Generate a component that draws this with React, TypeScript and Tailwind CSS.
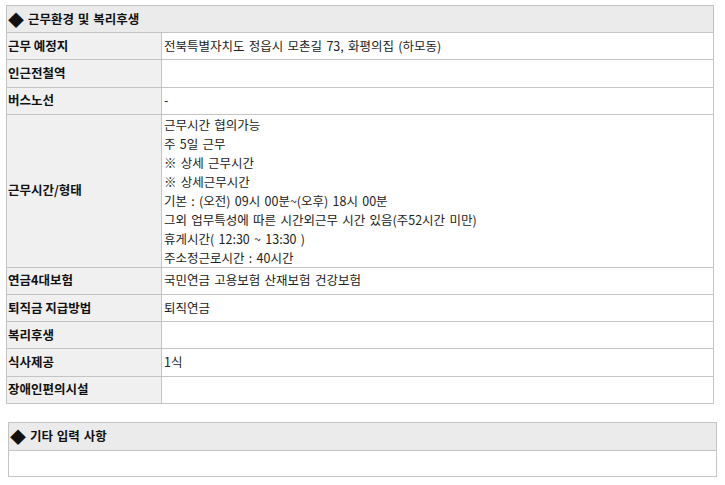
const rows: { label: string; value?: string[] }[] = [
  { label: '근무 예정지', value: ['전북특별자치도 정읍시 모촌길 73, 화평의집 (하모동)'] },
  { label: '인근전철역' },
  { label: '버스노선', value: ['-'] },
  {
    label: '근무시간/형태',
    value: [
      '근무시간 협의가능',
      '주 5일 근무',
      '※ 상세 근무시간',
      '※ 상세근무시간',
      '기본 : (오전) 09시 00분~(오후) 18시 00분',
      '그외 업무특성에 따른 시간외근무 시간 있음(주52시간 미만)',
      '휴게시간( 12:30 ~ 13:30 )',
      '주소정근로시간 : 40시간',
    ],
  },
  { label: '연금4대보험', value: ['국민연금 고용보험 산재보험 건강보험'] },
  { label: '퇴직금 지급방법', value: ['퇴직연금'] },
  { label: '복리후생' },
  { label: '식사제공', value: ['1식'] },
  { label: '장애인편의시설' },
];

export default function App() {
  return (
    <div
      className="w-[725px] h-[485px] bg-white text-[12.5px] text-[#222]"
      style={{ fontFamily: '"Noto Sans CJK KR", "Noto Sans", sans-serif' }}
    >
      <div className="pt-[5px] pl-[6px]">
        {/* 근무환경 및 복리후생 */}
        <div className="w-[708px] border border-[#c4c4c4]">
          <div className="h-[26.2px] flex items-center pl-[1px] bg-[#ebebeb] font-bold text-[12.5px] text-[#111] [word-spacing:1px]">
            <span className="inline-block w-[20px] text-[16px] leading-none">◆</span>근무환경 및 복리후생
          </div>
          {rows.map((r, i) => {
            const multi = (r.value?.length ?? 0) > 1;
            return (
              <div key={i} className="flex border-t border-[#c4c4c4]">
                <div className="w-[155px] shrink-0 border-r border-[#c4c4c4] bg-[#f0f0f0] flex items-center pl-[1px] font-bold text-[12.5px] text-[#111] min-h-[26.2px]">
                  {r.label}
                </div>
                <div
                  className={`flex-1 pl-[2px] text-[#222] [word-spacing:1.5px] ${
                    multi ? 'leading-[19px] py-0' : 'h-[26.2px] flex items-center'
                  }`}
                >
                  {multi ? r.value!.map((v, vi) => <div key={vi}>{v}</div>) : r.value?.[0]}
                </div>
              </div>
            );
          })}
        </div>
      </div>

      {/* 기타 입력 사항 */}
      <div className="pt-[18px] pl-[8px]">
        <div className="w-[709px] border border-[#c4c4c4]">
          <div className="h-[27px] flex items-center pl-[1px] bg-[#ebebeb] font-bold text-[12.5px] text-[#111] [word-spacing:1px]">
            <span className="inline-block w-[20px] text-[16px] leading-none">◆</span>기타 입력 사항
          </div>
          <div className="h-[26px] border-t border-[#c4c4c4]" />
        </div>
      </div>
    </div>
  );
}
